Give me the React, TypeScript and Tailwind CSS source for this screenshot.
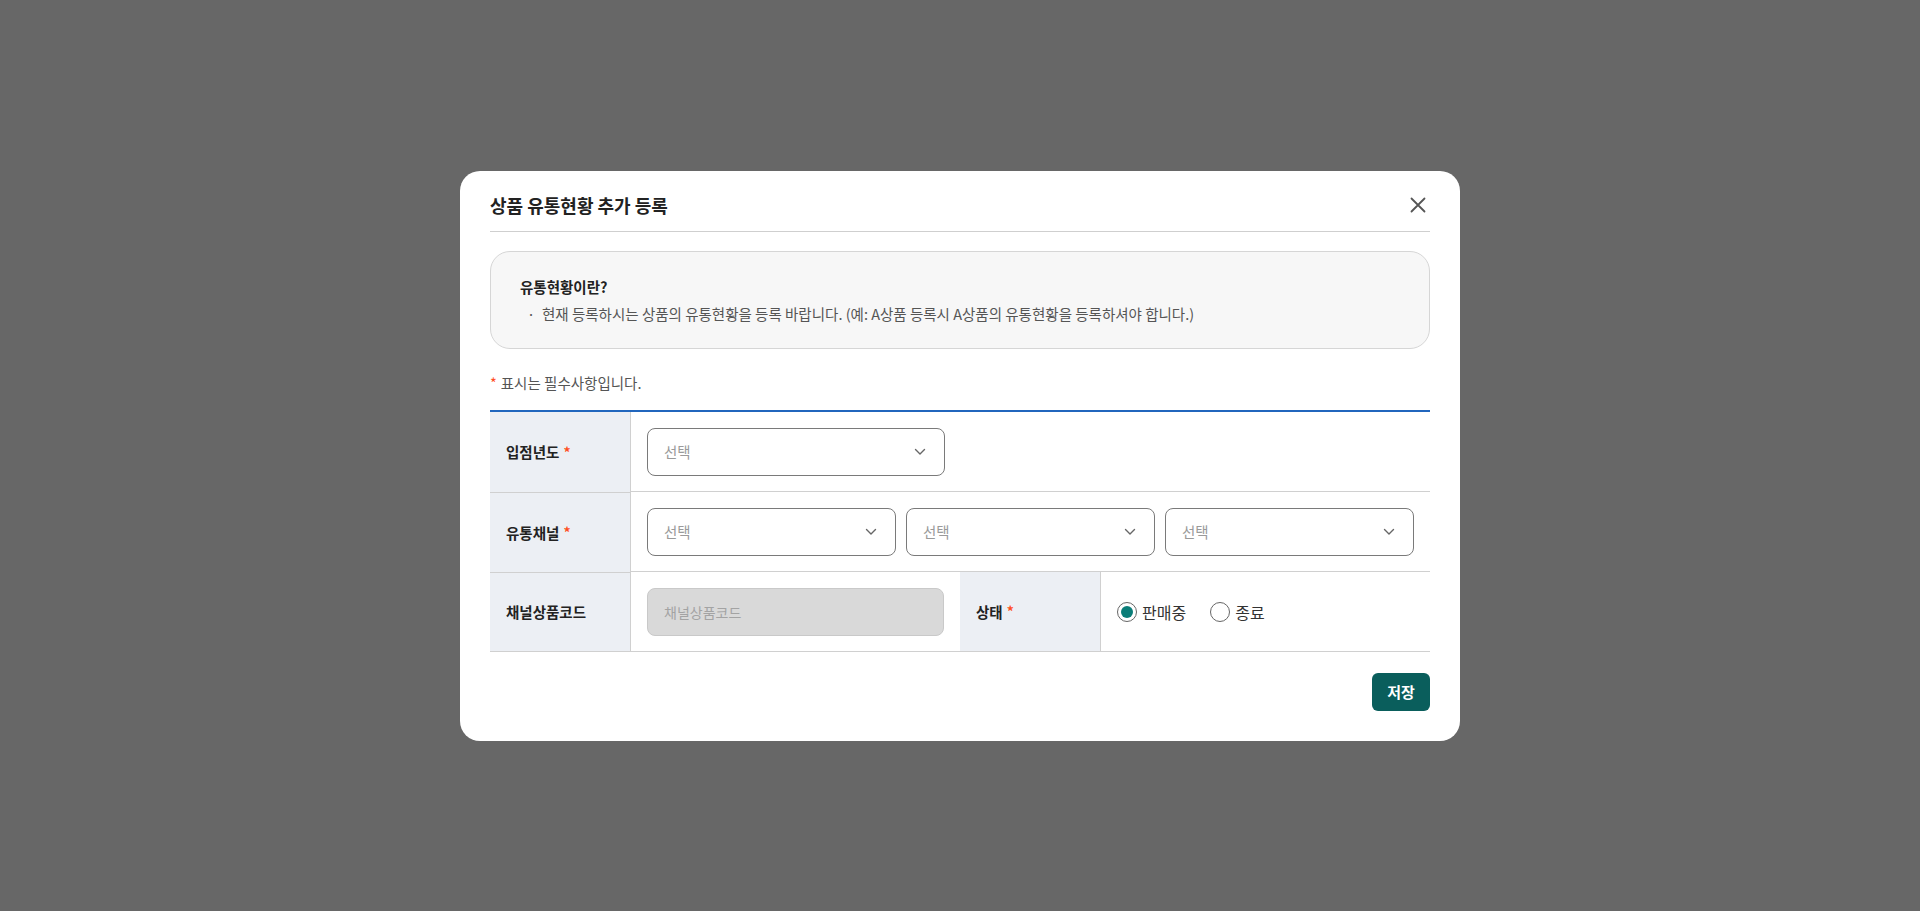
import { useState } from "react";

const FONT = { fontFamily: '"Noto Sans CJK KR", "Noto Sans", sans-serif' };

function Required() {
  return <span className="ml-1 text-[14px] font-bold text-[#ff4f1f]">*</span>;
}

function Chevron() {
  return (
    <svg width="12" height="8" viewBox="0 0 12 8" fill="none" className="shrink-0">
      <path d="M1.5 1.5 6 6l4.5-4.5" stroke="#666" strokeWidth="1.4" strokeLinecap="round" strokeLinejoin="round" />
    </svg>
  );
}

function Select({ className = "" }: { className?: string }) {
  return (
    <button
      type="button"
      className={`flex h-12 items-center justify-between rounded-lg border border-[#7a7a7a] bg-white pl-4 pr-[18px] text-left text-[14.5px] text-[#9a9a9a] ${className}`}
    >
      <span>선택</span>
      <Chevron />
    </button>
  );
}

function Label({ children, className = "" }: { children: React.ReactNode; className?: string }) {
  return (
    <div className={`flex items-center border-[#d0d0d0] bg-[#eceff4] px-4 text-[14.5px] font-bold text-[#222] ${className}`}>
      {children}
    </div>
  );
}

function Radio({ checked, label, onClick }: { checked: boolean; label: string; onClick: () => void }) {
  return (
    <button type="button" onClick={onClick} className="flex items-center gap-[5px] text-[16px] text-[#333]">
      <span className="flex h-5 w-5 items-center justify-center rounded-full border border-[#666] bg-white">
        {checked && <span className="h-3 w-3 rounded-full bg-[#0b7d78]" />}
      </span>
      {label}
    </button>
  );
}

export default function App() {
  const [status, setStatus] = useState<"on" | "off">("on");

  return (
    <div className="flex h-[911px] w-full items-start justify-center bg-[#676767] pt-[171px]" style={FONT}>
      <div className="w-[1000px] rounded-[20px] bg-white px-[30px] pb-[30px] pt-[22px]">
        <div className="flex items-center justify-between border-b border-[#cfcfcf] pb-[14px]">
          <h2 className="text-[18px] font-bold leading-[24px] text-[#222]">상품 유통현황 추가 등록</h2>
          <button type="button" className="mr-[4px] text-[#555]" aria-label="닫기">
            <svg width="16" height="16" viewBox="0 0 16 16" fill="none">
              <path d="M1.5 1.5l13 13M14.5 1.5l-13 13" stroke="currentColor" strokeWidth="1.8" strokeLinecap="round" />
            </svg>
          </button>
        </div>

        <div className="mt-[19px] rounded-[20px] border border-[#d6d6d6] bg-[#f7f7f7] px-[29px] pb-[23px] pt-[24px]">
          <p className="text-[14.5px] font-bold leading-[22px] text-[#222]">유통현황이란?</p>
          <p className="mt-[5px] flex text-[14.5px] leading-[22px] text-[#555]">
            <span className="w-[22px] pl-[7px]">·</span>
            현재 등록하시는 상품의 유통현황을 등록 바랍니다. (예: A상품 등록시 A상품의 유통현황을 등록하셔야 합니다.)
          </p>
        </div>

        <p className="mt-[23px] text-[14.5px] leading-[22px] text-[#555]">
          <span className="mr-1 text-[#ff4f1f]">*</span>표시는 필수사항입니다.
        </p>

        <div className="mt-[16px] grid grid-cols-[140px_1fr_140px_1fr] border-t-2 border-[#2166bd]">
          <Label>
            입점년도
            <Required />
          </Label>
          <div className="col-span-3 flex h-20 items-center border-b border-l border-[#d0d0d0] px-4">
            <Select className="w-[298px]" />
          </div>
          <Label className="border-t">
            유통채널
            <Required />
          </Label>
          <div className="col-span-3 grid h-20 grid-cols-3 items-center gap-[10px] border-b border-l border-[#d0d0d0] px-4">
            <Select />
            <Select />
            <Select />
          </div>
          <Label className="border-y">채널상품코드</Label>
          <div className="flex h-20 items-center border-b border-l border-[#d0d0d0] px-4">
            <input
              disabled
              placeholder="채널상품코드"
              className="h-12 w-full rounded-lg border border-[#c9c9c9] bg-[#d9d9d9] px-4 text-[14px] placeholder:text-[#a3a3a3]"
            />
          </div>
          <Label className="border-b">
            상태
            <Required />
          </Label>
          <div className="flex h-20 items-center gap-6 border-b border-l border-[#d0d0d0] px-4">
            <Radio checked={status === "on"} label="판매중" onClick={() => setStatus("on")} />
            <Radio checked={status === "off"} label="종료" onClick={() => setStatus("off")} />
          </div>
        </div>

        <div className="mt-[21px] flex justify-end">
          <button type="button" className="h-[38px] w-[58px] rounded-md bg-[#0a5e5c] text-[15px] font-bold text-white">
            저장
          </button>
        </div>
      </div>
    </div>
  );
}
